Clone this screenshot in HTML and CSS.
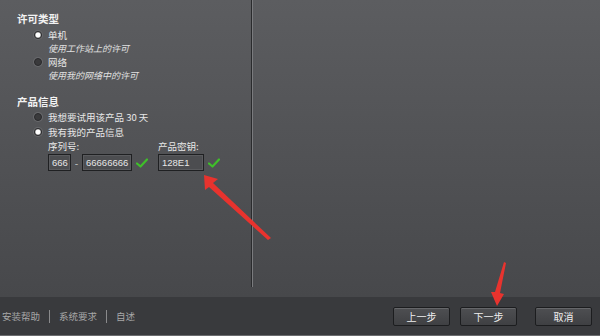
FILE: index.html
```html
<!DOCTYPE html>
<html lang="zh">
<head>
<meta charset="utf-8">
<link rel="stylesheet" href="styles.css">
</head>
<body>
<div class="app">
  <div class="main">
    <div class="left">
      <div class="section-title">许可类型</div>
      <div class="opt">
        <span class="radio on"></span>
        <div class="opt-text">
          <div class="lbl">单机</div>
          <div class="desc">使用工作站上的许可</div>
        </div>
      </div>
      <div class="opt">
        <span class="radio"></span>
        <div class="opt-text">
          <div class="lbl">网络</div>
          <div class="desc">使用我的网络中的许可</div>
        </div>
      </div>
      <div class="section-title sec2">产品信息</div>
      <div class="opt compact">
        <span class="radio"></span>
        <div class="lbl">我想要试用该产品 30 天</div>
      </div>
      <div class="opt compact">
        <span class="radio on"></span>
        <div class="lbl">我有我的产品信息</div>
      </div>
      <div class="fields">
        <div class="field">
          <div class="flabel">序列号:</div>
          <div class="frow">
            <span class="input w1">666</span>
            <span class="dash">-</span>
            <span class="input w2">66666666</span>
            <svg class="check" width="12" height="10" viewBox="0 0 12 10"><path d="M1 5.5 L4.5 8.5 L11 1.5" fill="none" stroke="#3fbf2a" stroke-width="2.2" stroke-linecap="round" stroke-linejoin="round"/></svg>
          </div>
        </div>
        <div class="field">
          <div class="flabel">产品密钥:</div>
          <div class="frow">
            <span class="input w3">128E1</span>
            <svg class="check" width="12" height="10" viewBox="0 0 12 10"><path d="M1 5.5 L4.5 8.5 L11 1.5" fill="none" stroke="#3fbf2a" stroke-width="2.2" stroke-linecap="round" stroke-linejoin="round"/></svg>
          </div>
        </div>
      </div>
    </div>
    <div class="divider"></div>
    <div class="right"></div>
  </div>
  <div class="footer">
    <div class="links">
      <span>安装帮助</span><span class="sep"></span><span>系统要求</span><span class="sep"></span><span>自述</span>
    </div>
    <div class="buttons">
      <span class="btn">上一步</span>
      <span class="btn">下一步</span>
      <span class="btn cancel">取消</span>
    </div>
  </div>
  <svg class="arrows" width="600" height="336" viewBox="0 0 600 336">
    <polygon points="204,175 218,179 213,183 271,238 268,240 209,187 205,190" fill="#e8332e"/>
    <polygon points="497,306 491,292 495,292 504,262 506,263 500,293 504,294" fill="#e8332e"/>
  </svg>
</div>
</body>
</html>
```
FILE: styles.css
```css
* { box-sizing: border-box; }
html, body { margin: 0; padding: 0; }
body {
  width: 600px; height: 336px; overflow: hidden;
  font-family: "Noto Sans CJK SC", "Liberation Sans", sans-serif;
  font-size: 10px; color: #e8e8e8;
}
.app {
  position: relative;
  width: 600px; height: 336px;
  display: flex; flex-direction: column;
  background: #3b3c3f;
}
.main {
  height: 297px;
  display: flex;
  background: linear-gradient(#5c5d60, #47484b);
}
.left {
  width: 251px;
  padding: 11px 0 0 17px;
}
.section-title {
  font-size: 10.5px; font-weight: bold; color: #f2f2f2;
  line-height: 15px; margin-bottom: 2px;
}
.sec2 { margin-top: 12px; margin-bottom: 1px; }
.opt {
  display: flex; align-items: flex-start;
  padding-left: 17px; margin-bottom: 0;
}
.opt.compact { margin-bottom: 0; align-items: center; }
.radio {
  width: 8px; height: 8px; border-radius: 50%;
  background: #3a3a3c; border: 1px solid #2a2a2c;
  margin: 3px 6px 0 0; flex: none;
  box-shadow: 0 0 0 1px #68696c;
}
.opt.compact .radio { margin-top: 0; }
.radio.on { background: radial-gradient(circle, #ffffff 0 2px, #d0d0d0 2.5px, #8a8a8a 4px); }
.lbl { line-height: 14px; font-size: 9.5px; }
.opt.compact .lbl { line-height: 14.5px; }
.desc { font-style: italic; line-height: 13px; color: #e0e0e0; font-size: 9px; }
.fields {
  display: flex; gap: 10px; padding-left: 31px; margin-top: 0;
}
.flabel { line-height: 14px; font-size: 9.5px; }
.frow { display: flex; align-items: center; margin-top: 1px; }
.input {
  height: 17px; line-height: 15px;
  background: #4c4d50; border: 1px solid #1f2022;
  box-shadow: inset 0 0 0 1px #5a5b5e;
  color: #e6e6e6; font-family: "Liberation Sans", sans-serif; font-size: 9.5px;
  padding-left: 3px;
}
.w1 { width: 23px; }
.w2 { width: 50px; }
.w3 { width: 46px; }
.dash { width: 11px; text-align: center; color: #cfcfcf; }
.check { margin-left: 4px; }
.divider {
  width: 2px; height: 287px;
  background: linear-gradient(90deg, #2a2b2d 0 1px, #7a7b7e 1px);
}
.right { flex: 1; }
.footer {
  flex: 1;
  display: flex; align-items: center; justify-content: space-between;
  padding: 0 8px 2px 0;
  border-bottom: 1px solid #6a6b6e;
  background: #393a3d;
}
.links { display: flex; align-items: center; color: #a8a8a8; font-size: 9.5px; padding-left: 2px; padding-top: 2px; }
.sep { width: 1px; height: 13px; background: #8a8a8c; margin: 0 9px; }
.buttons { display: flex; gap: 10px; padding-top: 3px; }
.btn {
  width: 57px; height: 19px;
  display: flex; align-items: center; justify-content: center;
  background: linear-gradient(#4e4f52, #3f4043);
  border: 1px solid #1c1d1f; border-radius: 2px;
  box-shadow: inset 0 1px 0 #66676a;
  color: #efefef; font-size: 10px;
}
.btn.cancel { margin-left: 8px; }
.arrows { position: absolute; left: 0; top: 0; pointer-events: none; }
```
